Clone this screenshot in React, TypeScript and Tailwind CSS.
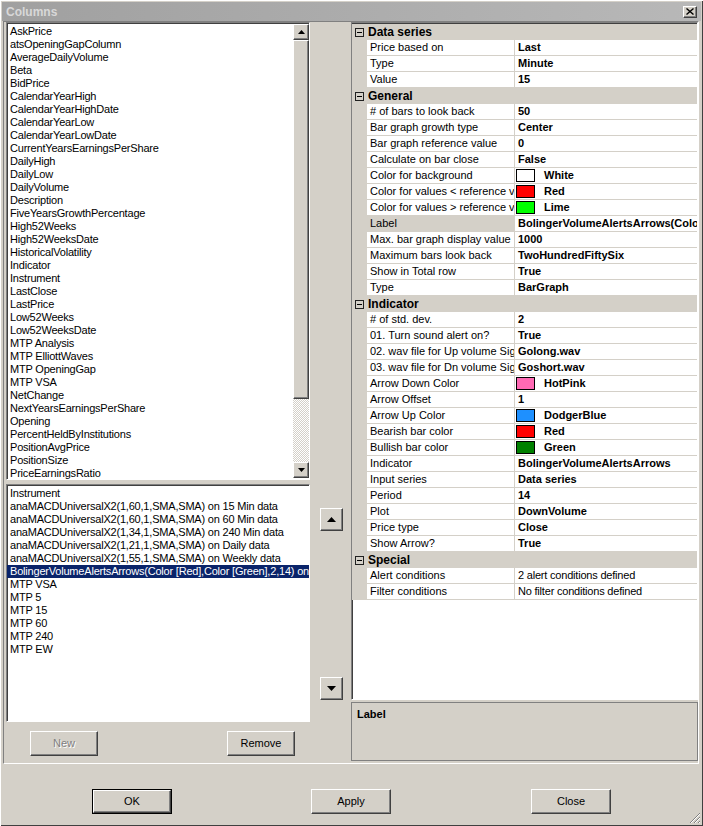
import React from "react";

type Row =
  | { cat: string }
  | { name: string; value: string; color?: string; plain?: boolean; selected?: boolean };

const topItems = [
  "AskPrice",
  "atsOpeningGapColumn",
  "AverageDailyVolume",
  "Beta",
  "BidPrice",
  "CalendarYearHigh",
  "CalendarYearHighDate",
  "CalendarYearLow",
  "CalendarYearLowDate",
  "CurrentYearsEarningsPerShare",
  "DailyHigh",
  "DailyLow",
  "DailyVolume",
  "Description",
  "FiveYearsGrowthPercentage",
  "High52Weeks",
  "High52WeeksDate",
  "HistoricalVolatility",
  "Indicator",
  "Instrument",
  "LastClose",
  "LastPrice",
  "Low52Weeks",
  "Low52WeeksDate",
  "MTP Analysis",
  "MTP ElliottWaves",
  "MTP OpeningGap",
  "MTP VSA",
  "NetChange",
  "NextYearsEarningsPerShare",
  "Opening",
  "PercentHeldByInstitutions",
  "PositionAvgPrice",
  "PositionSize",
  "PriceEarningsRatio",
];

const bottomItems = [
  "Instrument",
  "anaMACDUniversalX2(1,60,1,SMA,SMA) on 15 Min data",
  "anaMACDUniversalX2(1,60,1,SMA,SMA) on 60 Min data",
  "anaMACDUniversalX2(1,34,1,SMA,SMA) on 240 Min data",
  "anaMACDUniversalX2(1,21,1,SMA,SMA) on Daily data",
  "anaMACDUniversalX2(1,55,1,SMA,SMA) on Weekly data",
  "BolingerVolumeAlertsArrows(Color [Red],Color [Green],2,14) on 15 Min data",
  "MTP VSA",
  "MTP 5",
  "MTP 15",
  "MTP 60",
  "MTP 240",
  "MTP EW",
];

const rows: Row[] = [
  { cat: "Data series" },
  { name: "Price based on", value: "Last" },
  { name: "Type", value: "Minute" },
  { name: "Value", value: "15" },
  { cat: "General" },
  { name: "# of bars to look back", value: "50" },
  { name: "Bar graph growth type", value: "Center" },
  { name: "Bar graph reference value", value: "0" },
  { name: "Calculate on bar close", value: "False" },
  { name: "Color for background", value: "White", color: "#ffffff" },
  { name: "Color for values < reference value", value: "Red", color: "#ff0000" },
  { name: "Color for values > reference value", value: "Lime", color: "#00ff00" },
  { name: "Label", value: "BolingerVolumeAlertsArrows(Color [Red],Color [Green],2,14)", selected: true },
  { name: "Max. bar graph display value", value: "1000" },
  { name: "Maximum bars look back", value: "TwoHundredFiftySix" },
  { name: "Show in Total row", value: "True" },
  { name: "Type", value: "BarGraph" },
  { cat: "Indicator" },
  { name: "# of std. dev.", value: "2" },
  { name: "01. Turn sound alert on?", value: "True" },
  { name: "02. wav file for Up volume Signal", value: "Golong.wav" },
  { name: "03. wav file for Dn volume Signal", value: "Goshort.wav" },
  { name: "Arrow Down Color", value: "HotPink", color: "#ff69b4" },
  { name: "Arrow Offset", value: "1" },
  { name: "Arrow Up Color", value: "DodgerBlue", color: "#1e90ff" },
  { name: "Bearish bar color", value: "Red", color: "#ff0000" },
  { name: "Bullish bar color", value: "Green", color: "#008000" },
  { name: "Indicator", value: "BolingerVolumeAlertsArrows" },
  { name: "Input series", value: "Data series" },
  { name: "Period", value: "14" },
  { name: "Plot", value: "DownVolume" },
  { name: "Price type", value: "Close" },
  { name: "Show Arrow?", value: "True" },
  { cat: "Special" },
  { name: "Alert conditions", value: "2 alert conditions defined", plain: true },
  { name: "Filter conditions", value: "No filter conditions defined", plain: true },
];

const raised =
  "border border-t-white border-l-white border-r-[#404040] border-b-[#404040] shadow-[inset_-1px_-1px_0_#808080] bg-[#d4d0c8]";
const sunken =
  "border border-t-[#808080] border-l-[#808080] border-r-white border-b-white shadow-[inset_1px_1px_0_#404040]";

function Arrow({ down, big }: { down?: boolean; big?: boolean }) {
  const w = big ? 9 : 7;
  const h = big ? 5 : 4;
  return (
    <svg width={w} height={h} viewBox={`0 0 ${w} ${h}`}>
      <polygon points={down ? `0,0 ${w},0 ${w / 2},${h}` : `0,${h} ${w},${h} ${w / 2},0`} fill="#000" />
    </svg>
  );
}

function Button({ label, disabled, primary }: { label: string; disabled?: boolean; primary?: boolean }) {
  if (primary) {
    return (
      <div className="w-[80px] h-[25px] border border-black">
        <div className={`${raised} w-full h-full flex items-center justify-center text-black`}>{label}</div>
      </div>
    );
  }
  return (
    <div
      className={`${raised} w-[68px] h-[25px] flex items-center justify-center ${disabled ? "text-[#808080] [text-shadow:1px_1px_0_#fff]" : "text-black"}`}
    >
      {label}
    </div>
  );
}

export default function App() {
  return (
    <div className="w-[703px] h-[826px] bg-[#d4d0c8] flex flex-col font-['Liberation_Sans',Arial,sans-serif] text-[11px] text-black overflow-hidden relative shadow-[inset_1px_1px_0_#fff,inset_-1px_-1px_0_#404040]">
      {/* title bar */}
      <div className="mx-[2px] mt-[2px] h-[19px] flex items-center justify-between pl-[4px] pr-[4px] bg-gradient-to-r from-[#a0a0a0] to-[#b8b8b8]">
        <span className="font-bold text-[12px] text-[#d8d8d8]">Columns</span>
        <div className={`${raised} w-[14px] h-[12px] flex items-center justify-center`}>
          <svg width="8" height="7" viewBox="0 0 8 7">
            <path d="M0.5 0.5 L7.5 6.5 M7.5 0.5 L0.5 6.5" stroke="#000" strokeWidth="1.4" />
          </svg>
        </div>
      </div>

      {/* main panel */}
      <div className="ml-[3px] w-[696px] h-[743px] border border-t-[#808080] border-l-[#808080] border-r-white border-b-white flex">
        {/* left column */}
        <div className="pl-[2px] w-[306px] flex flex-col tracking-[-0.2px]">
          <div className={`${sunken} h-[458px] bg-white flex`}>
            <div className="flex-1 overflow-hidden pl-[3px] pt-[2px]">
              {topItems.map((t) => (
                <div key={t} className="h-[13px] leading-[13px] whitespace-nowrap">
                  {t}
                </div>
              ))}
            </div>
            <div className="w-[16px] flex flex-col mt-[1px] mb-[1px] tracking-normal">
              <div className={`${raised} h-[16px] flex items-center justify-center`}>
                <Arrow />
              </div>
              <div className={`${raised} h-[359px]`} />
              <div className="flex-1 bg-[repeating-conic-gradient(#d4d0c8_0_25%,#ffffff_0_50%)] bg-[length:2px_2px]" />
              <div className={`${raised} h-[16px] flex items-center justify-center`}>
                <Arrow down />
              </div>
            </div>
          </div>
          <div className={`${sunken} mt-[4px] h-[238px] bg-white overflow-hidden pt-[2px]`}>
            {bottomItems.map((t, i) => (
              <div
                key={t}
                className={`h-[13px] leading-[13px] whitespace-nowrap pl-[3px] ${i === 6 ? "bg-[#0a246a] text-white" : ""}`}
              >
                {t}
              </div>
            ))}
          </div>
          <div className="mt-[9px] flex pl-[24px] tracking-normal">
            <Button label="New" disabled />
            <div className="ml-[129px]">
              <Button label="Remove" />
            </div>
          </div>
        </div>

        {/* middle column */}
        <div className="w-[41px] flex flex-col items-center pl-[1px]">
          <div className={`${raised} mt-[486px] w-[23px] h-[23px] flex items-center justify-center`}>
            <Arrow big />
          </div>
          <div className={`${raised} mt-[146px] w-[23px] h-[23px] flex items-center justify-center`}>
            <Arrow big down />
          </div>
        </div>

        {/* right column */}
        <div className="w-[347px] flex flex-col">
          <div className={`${sunken} h-[678px] bg-white overflow-hidden pt-[1px]`}>
            {rows.map((r, i) =>
              "cat" in r ? (
                <div key={i} className="h-[16px] flex items-center bg-[#d4d0c8]">
                  <div className="w-[15px] flex items-center justify-center">
                    <div className="w-[9px] h-[9px] border border-[#202020] flex items-center justify-center">
                      <div className="w-[5px] h-[1px] bg-black" />
                    </div>
                  </div>
                  <span className="pl-[1px] font-bold text-[12px]">{r.cat}</span>
                </div>
              ) : (
                <div key={i} className="h-[16px] flex">
                  <div className="w-[15px] bg-[#d4d0c8]" />
                  <div
                    className={`w-[148px] border-b border-r border-[#d4d0c8] overflow-hidden whitespace-nowrap pl-[3px] leading-[15px] ${r.selected ? "bg-[#d4d0c8]" : ""}`}
                  >
                    {r.name}
                  </div>
                  <div
                    className={`flex-1 border-b border-[#d4d0c8] overflow-hidden whitespace-nowrap flex items-center ${r.plain ? "tracking-[-0.2px]" : "font-bold"} ${r.color ? "pl-[1px]" : "pl-[3px]"}`}
                  >
                    {r.color && (
                      <span
                        className="inline-block w-[19px] h-[13px] border border-black mr-[9px] shrink-0"
                        style={{ backgroundColor: r.color }}
                      />
                    )}
                    {r.value}
                  </div>
                </div>
              )
            )}
          </div>
          <div className="mt-[2px] h-[59px] border border-[#808080] pl-[5px] pt-[3px]">
            <span className="font-bold">Label</span>
          </div>
        </div>
      </div>

      {/* footer */}
      <div className="flex pt-[25px] pl-[92px]">
        <Button label="OK" primary />
        <div className="ml-[139px]">
          <div className={`${raised} w-[80px] h-[25px] flex items-center justify-center`}>Apply</div>
        </div>
        <div className="ml-[140px]">
          <div className={`${raised} w-[80px] h-[25px] flex items-center justify-center`}>Close</div>
        </div>
      </div>

      {/* resize grip */}
      <svg className="absolute right-[2px] bottom-[2px]" width="12" height="12" viewBox="0 0 12 12">
        <path d="M11 1 L1 11 M11 5 L5 11 M11 9 L9 11" stroke="#808080" strokeWidth="1" />
        <path d="M11 2 L2 11 M11 6 L6 11 M11 10 L10 11" stroke="#ffffff" strokeWidth="1" />
      </svg>
    </div>
  );
}
